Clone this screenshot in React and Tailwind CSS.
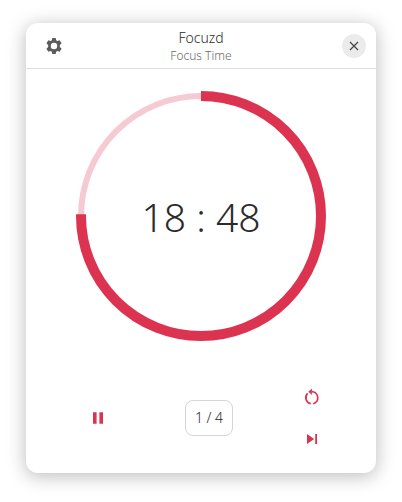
const TOTAL_SECONDS = 25 * 60;
const REMAINING_SECONDS = 18 * 60 + 48;
const RADIUS = 120;
const CIRCUMFERENCE = 2 * Math.PI * RADIUS;

function ProgressRing({ fraction, children }) {
  return (
    <div className="grid w-full max-w-[250px] place-items-center">
      <svg viewBox="0 0 250 250" className="col-start-1 row-start-1 w-full" aria-hidden="true">
        <circle cx="125" cy="125" r={RADIUS} fill="none" stroke="#f6cad2" strokeWidth="6" />
        <circle
          cx="125"
          cy="125"
          r={RADIUS}
          fill="none"
          stroke="#dc3450"
          strokeWidth="10"
          strokeDasharray={`${CIRCUMFERENCE * fraction} ${CIRCUMFERENCE}`}
          transform="rotate(-90 125 125)"
        />
      </svg>
      <div className="col-start-1 row-start-1">{children}</div>
    </div>
  );
}

function GearIcon() {
  return (
    <svg viewBox="0 0 16 16" className="size-4" fill="#5c5c5c" fillRule="evenodd" aria-hidden="true">
      <path d="M6.3 0h3.4l.45 2.3 1.25.72L13.6 2.2l2 3.1-1.75 1.7v2l1.75 1.7-2 3.1-2.2-.82-1.25.72L9.7 16H6.3l-.45-2.3-1.25-.72-2.2.82-2-3.1L2.15 9V7L.4 5.3l2-3.1 2.2.82 1.25-.72zM8 4.8a3.2 3.2 0 1 0 0 6.4 3.2 3.2 0 0 0 0-6.4z" />
    </svg>
  );
}

function CloseIcon() {
  return (
    <svg viewBox="0 0 16 16" className="size-4" aria-hidden="true">
      <path d="M4 4l8 8M12 4l-8 8" stroke="#484848" strokeWidth="1.3" fill="none" />
    </svg>
  );
}

function PauseIcon() {
  return (
    <svg viewBox="0 0 16 16" className="size-4" fill="#dc3450" aria-hidden="true">
      <path d="M3 2.3h3.6v11.4H3zM9.4 2.3H13v11.4H9.4z" />
    </svg>
  );
}

function RestartIcon() {
  return (
    <svg viewBox="0 0 16 16" className="size-4 overflow-visible" aria-hidden="true">
      <path
        d="M6.8 14.7A6.1 6.1 0 0 1 3.6 4.4M9.2 14.7A6.1 6.1 0 0 0 7.6 2.7"
        fill="none"
        stroke="#dc3450"
        strokeWidth="1.7"
      />
      <path d="M7.9 -.5v6.4L4.3 2.7z" fill="#dc3450" />
    </svg>
  );
}

function SkipIcon() {
  return (
    <svg viewBox="0 0 16 16" className="size-4" fill="#dc3450" aria-hidden="true">
      <path d="M3 3l7.2 5L3 13zM11.2 3H13v10h-1.8z" />
    </svg>
  );
}

export default function App() {
  return (
    <div className="bg-white px-[26px] pt-[23px] pb-[29px] font-['Noto_Sans',sans-serif] text-[#2b2b2b]">
      <main className="rounded-xl bg-white shadow-[0_3px_18px_1px_rgba(0,0,0,0.25)]">
        <header className="grid grid-cols-[1fr_auto_1fr] items-center border-b border-[#dedede] px-[10px] pt-[5px] pb-1">
          <button type="button" aria-label="Settings" className="grid size-9 place-items-center">
            <GearIcon />
          </button>
          <div className="text-center font-light">
            <h1 className="text-sm leading-5">Focuzd</h1>
            <p className="text-xs leading-4 text-[#6a6a6a]">Focus Time</p>
          </div>
          <button
            type="button"
            aria-label="Close"
            className="grid size-6 place-items-center justify-self-end rounded-full bg-[#ebebeb]"
          >
            <CloseIcon />
          </button>
        </header>

        <section className="flex justify-center px-6 pt-[22px]">
          <ProgressRing fraction={REMAINING_SECONDS / TOTAL_SECONDS}>
            <span className="block text-[39px] leading-none font-light">18 : 48</span>
          </ProgressRing>
        </section>

        <section className="flex items-center justify-between px-[47px] pt-[39px] pb-[17px]">
          <button type="button" aria-label="Pause" className="grid h-9 w-[50px] place-items-center">
            <PauseIcon />
          </button>
          <button
            type="button"
            aria-label="Session 1 of 4"
            className="h-9 w-12 rounded-lg border border-[#d6d6d6] text-sm font-light"
          >
            1 / 4
          </button>
          <div className="flex flex-col gap-2">
            <button type="button" aria-label="Restart" className="grid size-[34px] place-items-center">
              <RestartIcon />
            </button>
            <button type="button" aria-label="Skip" className="grid size-[34px] place-items-center">
              <SkipIcon />
            </button>
          </div>
        </section>
      </main>
    </div>
  );
}
